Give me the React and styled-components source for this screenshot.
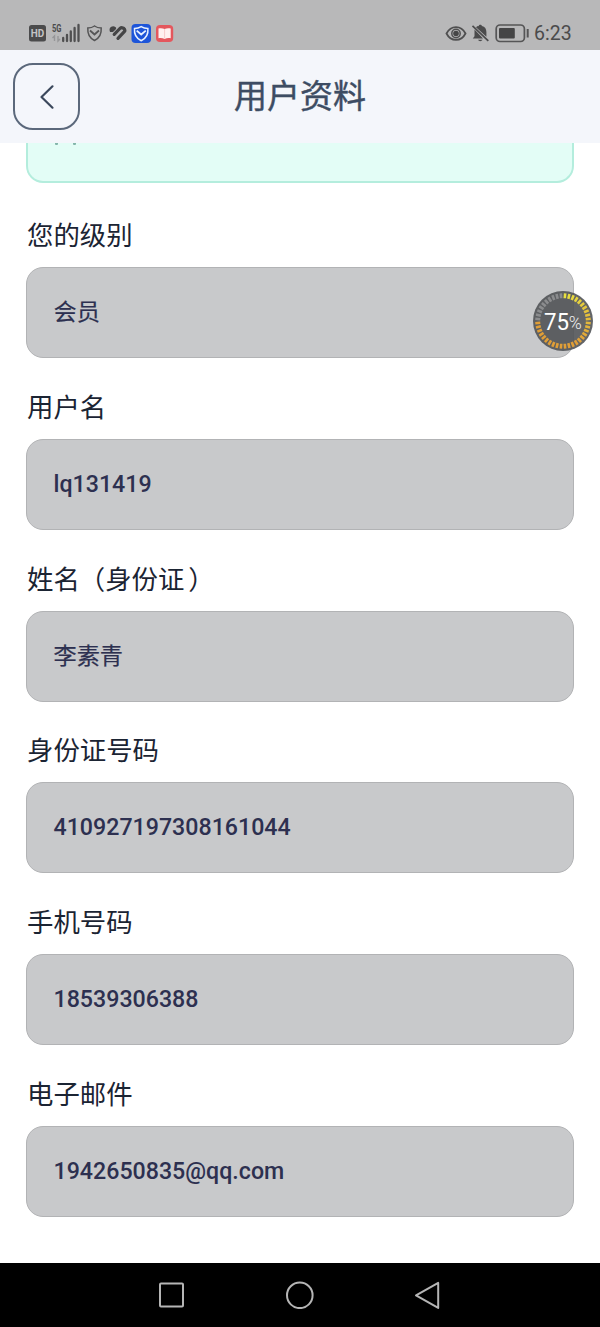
import styled, { createGlobalStyle } from "styled-components";

const fields = [
  { label: "您的级别", value: "会员", chinese: true },
  { label: "用户名", value: "lq131419" },
  { label: "姓名", note: "身份证", value: "李素青", chinese: true },
  { label: "身份证号码", value: "410927197308161044" },
  { label: "手机号码", value: "18539306388" },
  { label: "电子邮件", value: "1942650835@qq.com" },
];

const TICKS = 40;
const PERCENT = 75;

function tickColor(i) {
  if (i >= (TICKS * PERCENT) / 100) return "#8b8c8e";
  const t = Math.min(1, i / 16);
  return `rgb(${Math.round(232 - t * 8)}, ${Math.round(224 - t * 66)}, ${Math.round(65 - t * 10)})`;
}

function StatusIcons() {
  return (
    <svg width="148" height="22" viewBox="28 22 148 22" fill="none">
      <rect x="29" y="25" width="17" height="16.5" rx="2.5" fill="#4b4b4c" />
      <text x="37.5" y="37.3" textAnchor="middle" fontSize="11" fontWeight="700" textLength="13.5" lengthAdjust="spacingAndGlyphs" fill="#c4c4c5">HD</text>
      <text x="52" y="32.3" fontSize="10.5" fontWeight="700" textLength="9.5" lengthAdjust="spacingAndGlyphs" fill="#4b4b4c">5G</text>
      <path d="M54.5 41v-5l-2 2M58 36v5l2-2" stroke="#969698" strokeWidth="1.4" />
      <path d="M63.2 38v3M67 35v6M70.8 31.5v9.5M74.6 28v13M78.5 25v16" stroke="#505051" strokeWidth="2.3" strokeLinecap="round" />
      <path d="M94.5 26c2.2 1.6 4.4 2 6.7 2 .4 5.6-1.5 10-6.7 12.5-5.2-2.5-7.1-6.9-6.7-12.5 2.3 0 4.5-.4 6.7-2z" stroke="#555556" strokeWidth="1.5" />
      <path d="M90 30.5l4.5 4 4.5-4" stroke="#555556" strokeWidth="1.8" />
      <g stroke="#454546" strokeWidth="3.2" strokeLinecap="round" strokeLinejoin="round">
        <path d="M111 30.8c-.8-3 2-4 3.9-2.5L112.600 30.6z" strokeWidth="2.6" />
        <path d="M114.2 34.4l5.700-5.900c1.500-1.300 3.400-.9 4.200.4" />
        <path d="M118 38.3l6.300-6.600c.7-.8.6-1.900-.1-2.700" />
      </g>
      <rect x="131.5" y="24" width="19.5" height="19" rx="4" fill="#1d55d9" />
      <path d="M141.2 26.6c2.3 1.5 4.5 1.9 6.7 1.9.5 5.5-1.5 9.7-6.7 12.2-5.2-2.5-7.2-6.7-6.7-12.2 2.2 0 4.4-.4 6.7-1.9z" stroke="#e8f1ff" strokeWidth="1.5" />
      <path d="M136.7 30.6l4.5 3.9 4.6-3.9" stroke="#e8f1ff" strokeWidth="1.8" />
      <rect x="156" y="25" width="17.2" height="17" rx="4" fill="#e4575d" />
      <path d="M158.5 28.6c2.3-.8 4.2-.4 6.1.5 1.9-.9 3.8-1.3 6.1-.5v9.6c-2.3-.5-4.2-.1-6.1.7-1.9-.8-3.8-1.2-6.1-.7z" fill="#fff1f0" />
      <path d="M164.6 29v9.5" stroke="#f5c0c0" strokeWidth=".8" />
    </svg>
  );
}

function SystemIcons() {
  return (
    <svg width="85" height="22" viewBox="445 22 85 22" fill="none">
      <path d="M446.5 33.5c4.4-8.6 14.6-8.6 19 0-4.4 8.6-14.6 8.6-19 0z" stroke="#505051" strokeWidth="1.8" />
      <circle cx="456" cy="33.5" r="4.2" stroke="#505051" strokeWidth="1.5" />
      <circle cx="456" cy="33.5" r="2.8" fill="#464647" />
      <path d="M476 27.2c.9-.8 1.7-1 2.7-1.2.2-1.8 3-1.8 3.2 0 3.1.6 4.5 3 4.5 6v4.7zM474.5 29.5l8.5 9H472.8l1.7-2.3zM478 39.8h4.5c-.8 1.9-3.7 1.9-4.5 0z" fill="#4b4b4c" />
      <path d="M472.5 25.8l15.800 15" stroke="#4b4b4c" strokeWidth="1.7" />
      <rect x="496.2" y="25" width="28.2" height="16.5" rx="3.8" stroke="#555556" strokeWidth="1.7" />
      <rect x="499" y="28" width="15.8" height="10.5" rx="1" fill="#454546" />
      <path d="M527.7 29v8.5" stroke="#555556" strokeWidth="2" />
    </svg>
  );
}

function ProgressBadge() {
  return (
    <Badge>
      <svg width="62" height="62" viewBox="-31 -31 62 62">
        <circle r="30" fill="#505255" fillOpacity=".89" />
        {Array.from({ length: TICKS }, (_, i) => (
          <line
            key={i}
            y1="-22.8"
            y2="-27.8"
            stroke={tickColor(i)}
            strokeWidth="2.6"
            transform={`rotate(${(i + 0.5) * (360 / TICKS)})`}
          />
        ))}
        <text x="-19" y="8.5" fontSize="24" textLength="25" lengthAdjust="spacingAndGlyphs" fill="#fff">{PERCENT}</text>
        <text x="5.8" y="8.3" fontSize="18.5" fontWeight="300" textLength="13" lengthAdjust="spacingAndGlyphs" fill="#eee">%</text>
      </svg>
    </Badge>
  );
}

function App() {
  return (
    <>
      <GlobalStyle />
      <Screen>
        <StatusBar>
          <StatusIcons />
          <StatusRight>
            <SystemIcons />
            <Time>6:23</Time>
          </StatusRight>
        </StatusBar>
        <Header>
          <BackButton aria-label="返回">
            <svg width="16" height="26" viewBox="0 0 16 26" fill="none">
              <path d="M13.5 2.3L2.5 13l11 10.7" stroke="#3b485c" strokeWidth="2.2" strokeLinecap="round" strokeLinejoin="round" />
            </svg>
          </BackButton>
          <Title>用户资料</Title>
        </Header>
        <Content>
          <Notice>
            <Mark />
            <Mark />
          </Notice>
          <Form>
            {fields.map((field) => (
              <Field key={field.label}>
                <Label>
                  {field.label}
                  {field.note && <Note>（<span>{field.note}</span>）</Note>}
                </Label>
                <Value $chinese={field.chinese}>{field.value}</Value>
              </Field>
            ))}
          </Form>
        </Content>
        <NavBar>
          <svg width="28" height="28" viewBox="0 0 28 28" fill="none" stroke="#b5b5b5" strokeWidth="2">
            <rect x="2" y="2.5" width="23" height="23" rx="1" />
          </svg>
          <svg width="28" height="28" viewBox="0 0 28 28" fill="none" stroke="#b5b5b5" strokeWidth="2">
            <circle cx="13.8" cy="14.3" r="12.8" />
          </svg>
          <svg width="28" height="28" viewBox="0 0 28 28" fill="none" stroke="#b5b5b5" strokeWidth="2" strokeLinejoin="round">
            <path d="M24.2 1.9v25L2 14.4z" />
          </svg>
        </NavBar>
        <ProgressBadge />
      </Screen>
    </>
  );
}

export default App;

const GlobalStyle = createGlobalStyle`
  * {
    box-sizing: border-box;
  }

  body {
    margin: 0;
    background-color: #fff;
    font-family: Roboto, "Noto Sans CJK SC", sans-serif;
  }
`;

const Screen = styled.div`
  position: relative;
  display: flex;
  flex-direction: column;
  width: 600px;
  height: 1327px;
  overflow: hidden;
  background-color: #fff;
`;

const StatusBar = styled.div`
  display: flex;
  justify-content: space-between;
  flex: none;
  height: 50px;
  padding: 22px 29px 0 28px;
  background-color: #b8b8b9;
`;

const StatusRight = styled.div`
  display: flex;
  gap: 4px;
`;

const Time = styled.span`
  width: 37px;
  font-size: 19.5px;
  line-height: 23px;
  white-space: nowrap;
  color: #4b4b4c;
`;

const Header = styled.header`
  display: grid;
  grid-template-columns: 67px 1fr 67px;
  align-items: center;
  flex: none;
  height: 93px;
  padding: 0 13px;
  background-color: #f4f6fb;
`;

const BackButton = styled.button`
  display: flex;
  align-items: center;
  justify-content: center;
  width: 67px;
  height: 67px;
  padding: 0;
  border: 2px solid #5b687b;
  border-radius: 20px;
  background: none;
`;

const Title = styled.h1`
  margin: 0;
  font-size: 33px;
  font-weight: 400;
  line-height: 48px;
  text-align: center;
  color: #3d4c63;
  -webkit-text-stroke: 0.4px #3d4c63;
`;

const Content = styled.main`
  flex: 1;
  padding: 0 26px;
`;

const Notice = styled.div`
  display: flex;
  gap: 15px;
  height: 40px;
  padding-left: 27px;
  border: 2px solid #b4eddd;
  border-top: none;
  border-radius: 0 0 17px 17px;
  background-color: #e3fdf6;
`;

const Mark = styled.span`
  width: 3px;
  height: 2px;
  border-radius: 0 0 1px 1px;
  background-color: #83b5aa;
`;

const Form = styled.div`
  display: flex;
  flex-direction: column;
  gap: 28.8px;
  padding-top: 32px;
`;

const Field = styled.div`
  display: flex;
  flex-direction: column;
  gap: 12px;
`;

const Label = styled.div`
  height: 40px;
  padding-left: 1px;
  font-size: 26.4px;
  line-height: 43px;
  color: #1b2433;
`;

const Note = styled.span`
  margin-left: -1px;

  span {
    margin-right: 4px;
  }
`;

const Value = styled.div`
  height: 91px;
  padding-left: 26.5px;
  border: 1px solid #b2b3b5;
  border-radius: 17px;
  background-color: #c8c9cb;
  font-size: 23.2px;
  font-weight: ${({ $chinese }) => ($chinese ? 400 : 500)};
  line-height: ${({ $chinese }) => ($chinese ? "89px" : "88px")};
  color: #2d3050;
  -webkit-text-stroke: ${({ $chinese }) => ($chinese ? "0.2px #2d3050" : "0")};
`;

const NavBar = styled.nav`
  display: flex;
  justify-content: center;
  align-items: center;
  gap: 100px;
  flex: none;
  height: 64px;
  background-color: #000;
`;

const Badge = styled.div`
  position: absolute;
  top: 290px;
  left: 532px;
  height: 62px;
`;
